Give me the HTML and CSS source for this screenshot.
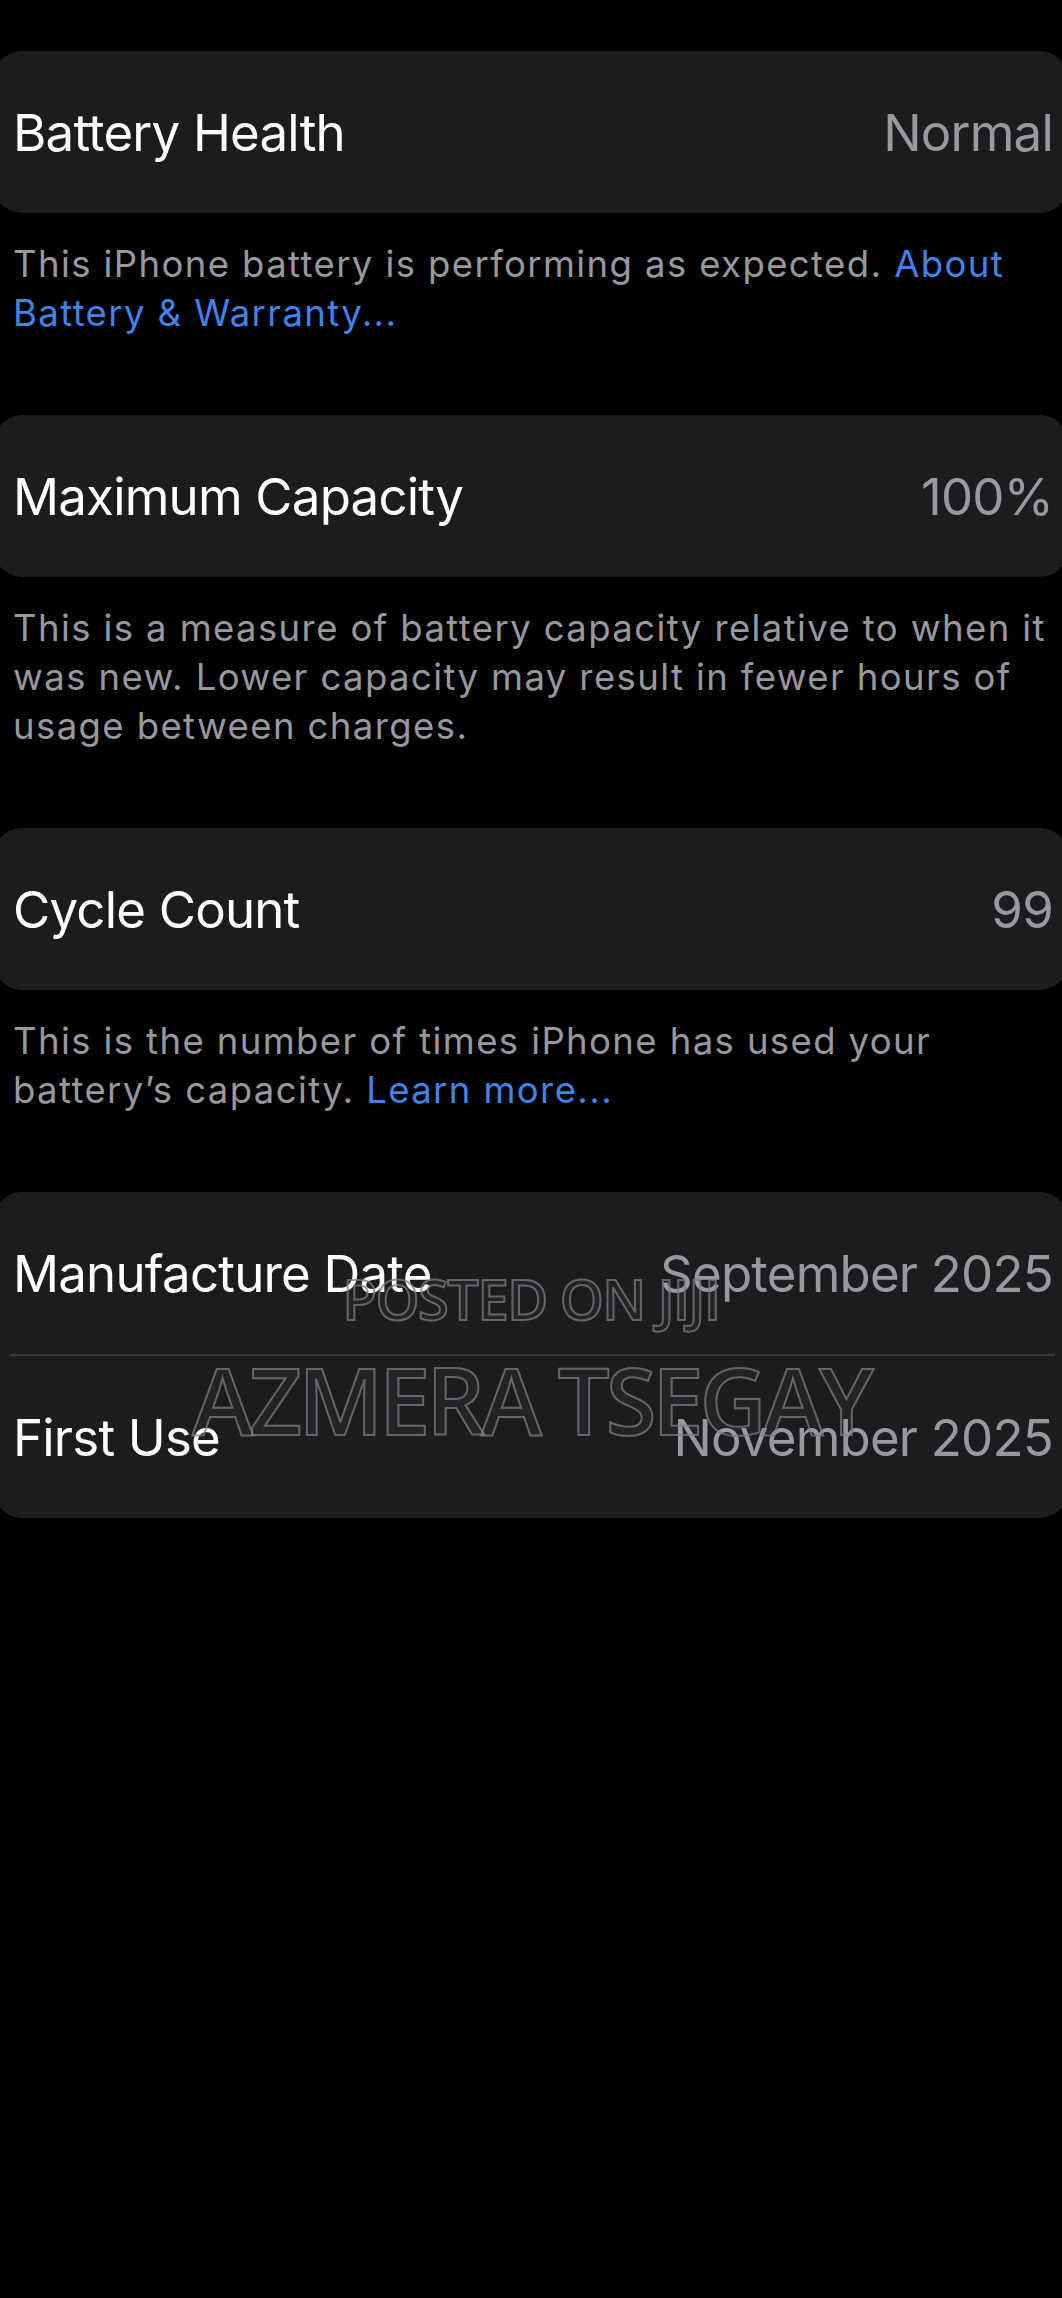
FILE: index.html
```html
<!DOCTYPE html>
<html lang="en">
<head>
    <meta charset="UTF-8">
    <meta name="viewport" content="width=device-width, initial-scale=1.0">
    <title>Battery Health</title>
    <link rel="stylesheet" href="styles.css">
</head>
<body>
    <div class="page">
        <!-- Battery health -->
        <div class="group">
            <div class="card">
                <div class="row">
                    <span class="label">Battery Health</span>
                    <span class="value">Normal</span>
                </div>
            </div>
            <p class="footer">This iPhone battery is performing as expected. <a href="#" class="link">About Battery &amp; Warranty...</a></p>
        </div>

        <!-- Maximum capacity -->
        <div class="group">
            <div class="card">
                <div class="row">
                    <span class="label">Maximum Capacity</span>
                    <span class="value">100%</span>
                </div>
            </div>
            <p class="footer">This is a measure of battery capacity relative to when it was new. Lower capacity may result in fewer hours of usage between charges.</p>
        </div>

        <!-- Cycle count -->
        <div class="group">
            <div class="card">
                <div class="row">
                    <span class="label">Cycle Count</span>
                    <span class="value">99</span>
                </div>
            </div>
            <p class="footer">This is the number of times iPhone has used your battery’s capacity. <a href="#" class="link">Learn more...</a></p>
        </div>

        <!-- Dates -->
        <div class="group">
            <div class="card card-dates">
                <div class="row">
                    <span class="label">Manufacture Date</span>
                    <span class="value">September 2025</span>
                </div>
                <div class="separator"></div>
                <div class="row">
                    <span class="label">First Use</span>
                    <span class="value">November 2025</span>
                </div>
                <div class="watermark watermark-small">POSTED ON JIJI</div>
                <div class="watermark watermark-big">AZMERA TSEGAY</div>
            </div>
        </div>
    </div>
</body>
</html>
```

FILE: styles.css
```css
body {
    margin: 0;
    background-color: #000;
    font-family: Inter, "Noto Sans", sans-serif;
    color: #fff;
}
.page {
    padding-top: 51px;
}
.card {
    position: relative;
    margin: 0 -6px;
    background-color: #1c1c1e;
    border-radius: 28px;
    overflow: hidden;
}
.row {
    height: 162px;
    display: flex;
    justify-content: space-between;
    align-items: center;
    padding: 0 15px 0 19px;
}
.label {
    font-size: 51px;
    letter-spacing: -0.8px;
    color: #fff;
}
.value {
    font-size: 51px;
    letter-spacing: -0.8px;
    color: #98989e;
}
.separator {
    height: 2px;
    margin: 0 13px 0 16px;
    background-color: #3a3a3c;
}
.footer {
    margin: 0;
    padding: 27px 8px 77px 13px;
    font-size: 36.5px;
    line-height: 49px;
    letter-spacing: 1.4px;
    color: #98989e;
}
.link {
    color: #3f84e8;
    text-decoration: none;
}
.watermark {
    position: absolute;
    left: 0;
    right: 0;
    text-align: center;
    font-family: "Open Sans", sans-serif;
    font-weight: 600;
    line-height: 1;
    color: rgba(255, 255, 255, 0.03);
    -webkit-text-stroke: 2px rgba(125, 125, 130, 0.75);
    pointer-events: none;
}
.watermark-small {
    top: 78px;
    font-size: 56px;
    letter-spacing: -1.5px;
}
.watermark-big {
    top: 162px;
    font-size: 92px;
    letter-spacing: -4px;
}
```
